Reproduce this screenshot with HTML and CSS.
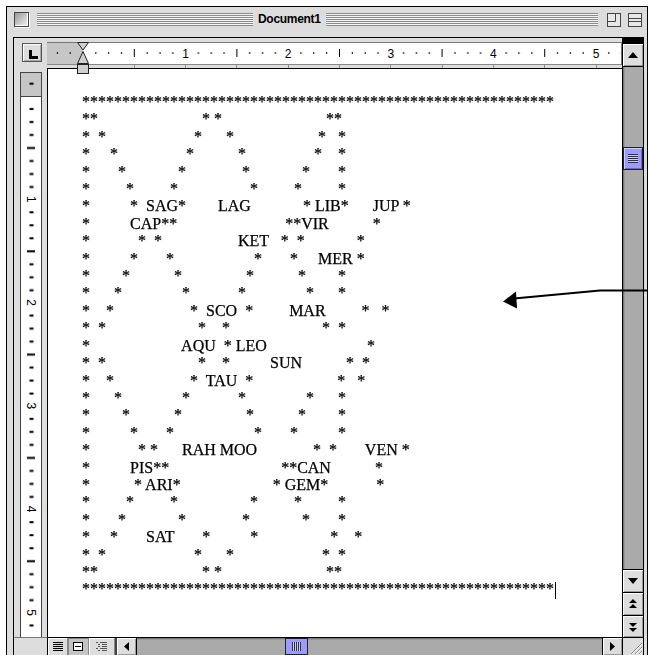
FILE: index.html
```html
<!DOCTYPE html>
<html lang="en">
<head>
    <meta charset="UTF-8">
    <meta name="viewport" content="width=device-width, initial-scale=1.0">
    <title>Document1</title>
    <link rel="stylesheet" href="styles.css">
</head>
<body>
    <div class="window">
        <div class="titlebar">
            <span class="close-box"></span>
            <span class="stripes left"></span>
            <span class="title">Document1</span>
            <span class="stripes"></span>
            <svg class="zoom-box" width="14" height="14" viewBox="0 0 14 14">
                <rect x="0.5" y="0.5" width="13" height="13" fill="#e8e8e8" stroke="#444"/>
                <path d="M0.5 8.5H8.5V0.5" fill="none" stroke="#444"/>
            </svg>
            <svg class="collapse-box" width="14" height="14" viewBox="0 0 14 14">
                <rect x="0.5" y="0.5" width="13" height="13" fill="#e8e8e8" stroke="#444"/>
                <path d="M0.5 5.5H13.5M0.5 8.5H13.5" fill="none" stroke="#444"/>
            </svg>
        </div>

        <div class="frame">
            <div class="tab-cell">
                <span class="tab-button">
                    <svg width="18" height="17" viewBox="0 0 18 17"><path d="M6 6h3v6h6v3H6z" fill="#000"/></svg>
                </span>
            </div>

            <div class="hruler">
                <svg width="575" height="30" viewBox="0 0 575 30" overflow="visible">
                    <defs>
                        <pattern id="hticks" patternUnits="userSpaceOnUse" x="36" y="0" width="102.6" height="30">
                            <rect x="12.3" y="14" width="1" height="2"/>
                            <rect x="25.1" y="14" width="1" height="2"/>
                            <rect x="38" y="14" width="1" height="2"/>
                            <rect x="50.8" y="11" width="1" height="8"/>
                            <rect x="63.6" y="14" width="1" height="2"/>
                            <rect x="76.5" y="14" width="1" height="2"/>
                            <rect x="89.3" y="14" width="1" height="2"/>
                        </pattern>
                    </defs>
                    <rect x="0" y="4" width="575" height="1" fill="#777"/>
                    <rect x="0" y="5" width="36" height="21" fill="#c6c6c6"/>
                    <rect x="36" y="5" width="538" height="21" fill="#fff"/>
                    <rect x="0" y="26" width="575" height="1" fill="#888"/>
                    <rect x="574" y="4" width="1" height="23" fill="#777"/>
                    <rect x="0" y="5" width="574" height="21" fill="url(#hticks)"/>
                    <g class="ruler-num" text-anchor="middle">
                        <text x="138.6" y="19.5">1</text>
                        <text x="241.2" y="19.5">2</text>
                        <text x="343.8" y="19.5">3</text>
                        <text x="446.4" y="19.5">4</text>
                        <text x="549" y="19.5">5</text>
                    </g>
                    <g fill="#888">
                        <rect x="87" y="27" width="1" height="3"/>
                        <rect x="138" y="27" width="1" height="3"/>
                        <rect x="189" y="27" width="1" height="3"/>
                        <rect x="241" y="27" width="1" height="3"/>
                        <rect x="292" y="27" width="1" height="3"/>
                        <rect x="343" y="27" width="1" height="3"/>
                        <rect x="395" y="27" width="1" height="3"/>
                        <rect x="446" y="27" width="1" height="3"/>
                        <rect x="497" y="27" width="1" height="3"/>
                        <rect x="549" y="27" width="1" height="3"/>
                    </g>
                    <g fill="#d0d0d0" stroke="#222">
                        <polygon points="30.5,4.5 41.5,4.5 36,12"/>
                        <polygon points="36,13.5 30.5,25.5 41.5,25.5"/>
                        <rect x="30.5" y="26.5" width="11" height="9"/>
                    </g>
                </svg>
            </div>

            <div class="vscroll">
                <div class="sb-cap"></div>
                <div class="sb-btn up">
                    <svg width="10" height="6" viewBox="0 0 10 6"><path d="M0 6L5 0L10 6z" fill="#000"/></svg>
                </div>
                <div class="sb-track">
                    <div class="sb-thumb"><span class="grip"></span></div>
                </div>
                <div class="sb-btn down">
                    <svg width="10" height="6" viewBox="0 0 10 6"><path d="M0 0L5 6L10 0z" fill="#000"/></svg>
                </div>
                <div class="sb-btn pager">
                    <svg width="8" height="10" viewBox="0 0 8 10"><path d="M0 4L4 0L8 4zM0 9L4 5L8 9z" fill="#000"/></svg>
                </div>
                <div class="sb-btn pager last">
                    <svg width="8" height="10" viewBox="0 0 8 10"><path d="M0 1L4 5L8 1zM0 6L4 10L8 6z" fill="#000"/></svg>
                </div>
            </div>

            <div class="vruler">
                <svg width="33" height="569" viewBox="0 0 33 569">
                    <defs>
                        <pattern id="vticks" patternUnits="userSpaceOnUse" x="0" y="28" width="33" height="103.3">
                            <rect x="15.5" y="12" width="4" height="2"/>
                            <rect x="15.5" y="25" width="4" height="2"/>
                            <rect x="15.5" y="38" width="4" height="2"/>
                            <rect x="13" y="51" width="8" height="2"/>
                            <rect x="15.5" y="64" width="4" height="2"/>
                            <rect x="15.5" y="77" width="4" height="2"/>
                            <rect x="15.5" y="90" width="4" height="2"/>
                        </pattern>
                    </defs>
                    <rect x="6.5" y="4.5" width="21" height="566" fill="#fff" stroke="#444"/>
                    <rect x="7" y="5" width="20" height="23" fill="#c6c6c6"/>
                    <rect x="7" y="28" width="20" height="1" fill="#444"/>
                    <rect x="7" y="5" width="20" height="564" fill="url(#vticks)"/>
                    <g class="ruler-num" text-anchor="middle">
                        <text transform="translate(17.5 131.3) rotate(90)" dy="4.5">1</text>
                        <text transform="translate(17.5 234.6) rotate(90)" dy="4.5">2</text>
                        <text transform="translate(17.5 337.9) rotate(90)" dy="4.5">3</text>
                        <text transform="translate(17.5 441.2) rotate(90)" dy="4.5">4</text>
                        <text transform="translate(17.5 544.5) rotate(90)" dy="4.5">5</text>
                    </g>
                </svg>
            </div>

            <div class="page">
<pre class="doc">***********************************************************
**                          * *                          **
*  *                      *      *                     *   *
*     *                 *           *                 *    *
*       *             *              *             *       *
*         *         *                  *         *         *
*          *  SAG*        LAG             * LIB*      JUP *
*          CAP**                           **VIR           *
*            *  *                   KET   *  *             *
*          *       *                    *       *     MER *
*        *           *                *           *        *
*      *               *            *               *      *
*    *                   *  SCO  *         MAR         *   *
*  *                       *    *                       *  *
*                       AQU  * LEO                         *
*  *                       *    *          SUN           *  *
*    *                   *  TAU  *                     *   *
*      *               *            *               *      *
*        *           *                *           *        *
*          *       *                    *       *          *
*            * *      RAH MOO              *  *       VEN *
*          PIS**                            **CAN           *
*           * ARI*                       * GEM*            *
*         *         *                  *         *         *
*       *             *              *             *       *
*     *       SAT       *          *                  *    *
*  *                      *      *                      *  *
**                          * *                          **
***********************************************************<span class="caret"></span></pre>
            </div>

            <div class="ruler-foot"></div>

            <div class="hscroll">
                <span class="view-btn">
                    <svg width="10" height="9" viewBox="0 0 10 9"><path d="M0 0.5H10M0 2.5H10M0 4.5H10M0 6.5H10M0 8.5H10" stroke="#000"/></svg>
                </span>
                <span class="view-btn active">
                    <svg width="10" height="9" viewBox="0 0 10 9"><rect x="0.5" y="0.5" width="9" height="8" fill="#fff" stroke="#000"/><path d="M2 4.5H8" stroke="#000"/></svg>
                </span>
                <span class="view-btn wide">
                    <svg width="11" height="9" viewBox="0 0 11 9"><path d="M0 0.5H2M4 0.5H11M2 2.5H4M6 2.5H11M2 4.5H4M6 4.5H11M0 6.5H2M4 6.5H11M2 8.5H4M6 8.5H11" stroke="#555"/></svg>
                </span>
                <span class="hs-btn left">
                    <svg width="5" height="9" viewBox="0 0 5 9"><path d="M5 0L0 4.5L5 9z" fill="#000"/></svg>
                </span>
                <div class="hs-track"><span class="hs-thumb"></span></div>
                <span class="hs-btn right">
                    <svg width="5" height="9" viewBox="0 0 5 9"><path d="M0 0L5 4.5L0 9z" fill="#000"/></svg>
                </span>
            </div>

            <div class="resize">
                <svg width="20" height="17" viewBox="0 0 20 17">
                    <path d="M8 16L19 5M12 16L19 9M16 16L19 13" stroke="#888"/>
                    <path d="M9 16L19 6M13 16L19 10M17 16L19 14" stroke="#fff"/>
                </svg>
            </div>
        </div>
    </div>

    <svg class="callout" width="648" height="655" viewBox="0 0 648 655">
        <polyline points="648,290.5 600,290.5 514,298.5" fill="none" stroke="#000" stroke-width="2.2"/>
        <polygon points="503,301.5 516,291.5 517,308.5" fill="#000"/>
    </svg>
</body>
</html>
```

FILE: styles.css
```css
html, body {
    margin: 0;
    height: 655px;
    overflow: hidden;
    background: #fff;
}

body {
    padding: 6px 0 0 6px;
    box-sizing: border-box;
    font-family: "Liberation Sans", Arial, sans-serif;
}

.window {
    box-sizing: border-box;
    width: 642px;
    padding: 0 3px 0 6px;
    border: 1px solid #000;
    background: #ddd;
}

/* title bar */
.titlebar {
    display: flex;
    align-items: center;
    height: 25px;
    margin-bottom: 5px;
}

.close-box {
    box-sizing: border-box;
    width: 15px;
    height: 15px;
    margin: 0 8px 0 1px;
    border: 1px solid #444;
    background: linear-gradient(135deg, #999, #f4f4f4);
    box-shadow: inset -1px -1px #fff, 1px 1px #fff;
}

.stripes {
    flex: 1;
    height: 13px;
    background: repeating-linear-gradient(#8a8a8a 0 1px, #f6f6f6 1px 2px);
}

.stripes.left {
    flex: none;
    width: 216px;
}

.title {
    padding: 0 5px;
    font-weight: bold;
    font-size: 12px;
    letter-spacing: -0.3px;
    line-height: 25px;
    color: #000;
}

.zoom-box {
    margin-left: 9px;
}

.collapse-box {
    margin: 0 2px 0 7px;
}

/* document frame */
.frame {
    display: grid;
    grid-template-columns: 33px 575px 21px;
    grid-template-rows: 30px 569px 18px;
    border: 1px solid #000;
    background: #ddd;
}

.tab-cell {
    grid-column: 1;
    grid-row: 1;
    padding: 5px 0 0 8px;
}

.tab-button {
    display: block;
    box-sizing: border-box;
    width: 20px;
    height: 19px;
    border: 1px solid #555;
    background: #ddd;
    box-shadow: inset 1px 1px #fff, inset -1px -1px #aaa;
}

.tab-button svg {
    display: block;
}

.hruler {
    grid-column: 2;
    grid-row: 1;
    position: relative;
    z-index: 2;
}

.hruler svg,
.vruler svg {
    display: block;
}

.ruler-num {
    font-family: "Liberation Sans", Arial, sans-serif;
    font-size: 12px;
    fill: #000;
}

.vruler {
    grid-column: 1;
    grid-row: 2;
}

.page {
    grid-column: 2;
    grid-row: 2;
    box-sizing: border-box;
    padding: 24px 0 0 34px;
    border-left: 1px solid #000;
    border-top: 1px solid #000;
    background: #fff;
    overflow: hidden;
}

.doc {
    margin: 0;
    font-family: "Liberation Serif", "Times New Roman", serif;
    font-size: 16px;
    line-height: 17.4px;
    color: #000;
    -webkit-text-stroke: 0.25px #000;
    white-space: pre;
    will-change: transform;
}

.caret {
    display: inline-block;
    width: 1px;
    height: 17px;
    margin-left: 1px;
    vertical-align: -5px;
    background: #000;
}

/* vertical scroll bar */
.vscroll {
    grid-column: 3;
    grid-row: 1 / 3;
    display: flex;
    flex-direction: column;
    border-left: 1px solid #000;
    background: #aaa;
}

.sb-cap {
    height: 6px;
    background: #000;
}

.sb-btn {
    height: 22px;
    display: flex;
    align-items: center;
    justify-content: center;
    background: #ddd;
    box-shadow: inset 1px 1px #fff, inset -1px -1px #999;
}

.sb-btn.up {
    border-bottom: 1px solid #000;
}

.sb-btn.down,
.sb-btn.pager {
    border-top: 1px solid #000;
}

.sb-btn.last {
    height: 21px;
}

.sb-track {
    flex: 1;
    box-shadow: inset 1px 0 #777, inset 2px 0 #999;
}

.sb-thumb {
    box-sizing: border-box;
    height: 23px;
    margin-top: 80px;
    display: flex;
    align-items: center;
    justify-content: center;
    border: 1px solid #222;
    background: #9c9cff;
    box-shadow: inset 1px 1px #ccf, inset -1px -1px #66c;
}

.grip {
    width: 10px;
    height: 9px;
    background: repeating-linear-gradient(#333 0 1px, #c8c8ff 1px 2px);
}

/* bottom row */
.ruler-foot {
    grid-column: 1;
    grid-row: 3;
    border-top: 1px solid #777;
}

.hscroll {
    grid-column: 2;
    grid-row: 3;
    display: flex;
    box-sizing: border-box;
    border-top: 1px solid #000;
    border-left: 1px solid #000;
    background: #aaa;
}

.view-btn {
    display: flex;
    align-items: center;
    justify-content: center;
    box-sizing: border-box;
    width: 20px;
    background: #ddd;
    border-right: 1px solid #888;
    box-shadow: inset 1px 1px #fff;
}

.view-btn.active {
    width: 21px;
    background: #c4c4c4;
    box-shadow: inset 1px 1px #888;
}

.view-btn.wide {
    width: 26px;
}

.hs-btn {
    display: flex;
    align-items: center;
    justify-content: center;
    background: #ddd;
    box-shadow: inset 1px 1px #fff, inset -1px -1px #999;
}

.hs-btn.left {
    box-sizing: border-box;
    width: 22px;
    border-left: 2px solid #444;
    border-right: 1px solid #000;
}

.hs-btn.right {
    box-sizing: border-box;
    width: 20px;
    border-left: 1px solid #000;
}

.hs-track {
    flex: 1;
    box-shadow: inset 0 1px #777, inset 0 2px #999;
}

.hs-thumb {
    display: block;
    box-sizing: border-box;
    width: 23px;
    height: 17px;
    margin-left: 148px;
    border: 1px solid #222;
    background:
        repeating-linear-gradient(90deg, #333 0 1px, #c8c8ff 1px 2px) center / 9px 9px no-repeat,
        #9c9cff;
}

.resize {
    grid-column: 3;
    grid-row: 3;
    border-top: 1px solid #000;
    border-left: 1px solid #000;
    background: #ddd;
}

.resize svg {
    display: block;
}

/* annotation arrow drawn over the window */
.callout {
    position: absolute;
    left: 0;
    top: 0;
    pointer-events: none;
}
```
